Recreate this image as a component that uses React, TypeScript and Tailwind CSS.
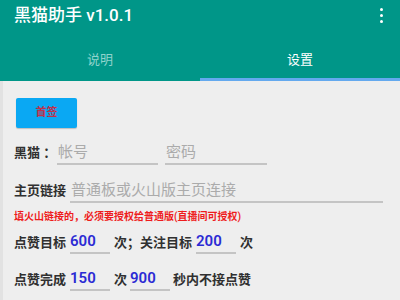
import React from 'react';

const font = "font-['Roboto','Noto_Sans_CJK_SC',sans-serif]";

function Field({ width, placeholder, value }: { width: string; placeholder?: string; value?: string }) {
  return (
    <div className={`${width} h-full flex items-center border-b-2 border-[#c4c4c4]`}>
      {value ? (
        <span className="text-[15px] text-[#2b2bd4] leading-none pb-[1px]">{value}</span>
      ) : (
        <span className="text-[15px] text-[#ababab] leading-none pl-[1px]">{placeholder}</span>
      )}
    </div>
  );
}

export default function App() {
  return (
    <div className={`w-[400px] h-[300px] overflow-hidden bg-[#eeeeee] ${font}`}>
      <div className="bg-[#009688] h-[81px] flex flex-col">
        <div className="h-[29px] flex items-center justify-between pl-[14px] pr-[17px] pt-[1px]">
          <span className="text-white text-[17px] font-medium leading-none">黑猫助手 v1.0.1</span>
          <div className="flex flex-col gap-[3px]">
            <span className="w-[3px] h-[3px] rounded-full bg-white" />
            <span className="w-[3px] h-[3px] rounded-full bg-white" />
            <span className="w-[3px] h-[3px] rounded-full bg-white" />
          </div>
        </div>
        <div className="flex-1 flex">
          <div className="flex-1 flex flex-col">
            <div className="flex-1 flex items-center justify-center pt-[13px] text-[13px] text-[#8fd3cc]">说明</div>
            <div className="h-[3px]" />
          </div>
          <div className="flex-1 flex flex-col">
            <div className="flex-1 flex items-center justify-center pt-[13px] text-[13px] text-white">设置</div>
            <div className="h-[3px] bg-[#64a9ee]" />
          </div>
        </div>
      </div>

      <div className="border-l-[3px] border-[#e2e2e2] pl-[11px] pt-[17px] h-[219px] text-[#303030]">
        <div className="w-[61px] h-[30px] ml-[2px] rounded-[2px] bg-[#0aa8f3] shadow-[0_1px_1px_rgba(0,0,0,0.2)] flex items-center justify-center">
          <span className="text-[11px] font-bold text-[#c0304a]">首签</span>
        </div>

        <div className="mt-[13px] h-[24px] flex items-center">
          <span className="w-[43px] text-[13px] font-semibold">黑猫 ：</span>
          <Field width="w-[101px]" placeholder="帐号" />
          <div className="w-[7px]" />
          <Field width="w-[102px]" placeholder="密码" />
        </div>

        <div className="mt-[14px] h-[24px] flex items-center">
          <span className="w-[56px] text-[13px] font-semibold">主页链接</span>
          <Field width="w-[313px]" placeholder="普通板或火山版主页连接" />
        </div>

        <div className="mt-[7px] h-[14px] flex items-center text-[10px] font-semibold text-[#ee1c1c] leading-none">
          填火山链接的，必须要授权给普通版(直播间可授权)
        </div>

        <div className="mt-[8px] h-[22px] flex items-center text-[13px] font-semibold">
          <span className="w-[56px]">点赞目标</span>
          <Field width="w-[40px]" value="600" />
          <span className="ml-[4px] w-[82px]">次；关注目标</span>
          <Field width="w-[40px]" value="200" />
          <span className="ml-[4px]">次</span>
        </div>

        <div className="mt-[15px] h-[22px] flex items-center text-[13px] font-semibold">
          <span className="w-[56px]">点赞完成</span>
          <Field width="w-[40px]" value="150" />
          <span className="ml-[4px] w-[16px]">次</span>
          <Field width="w-[40px]" value="900" />
          <span className="ml-[3px]">秒内不接点赞</span>
        </div>
      </div>
    </div>
  );
}
